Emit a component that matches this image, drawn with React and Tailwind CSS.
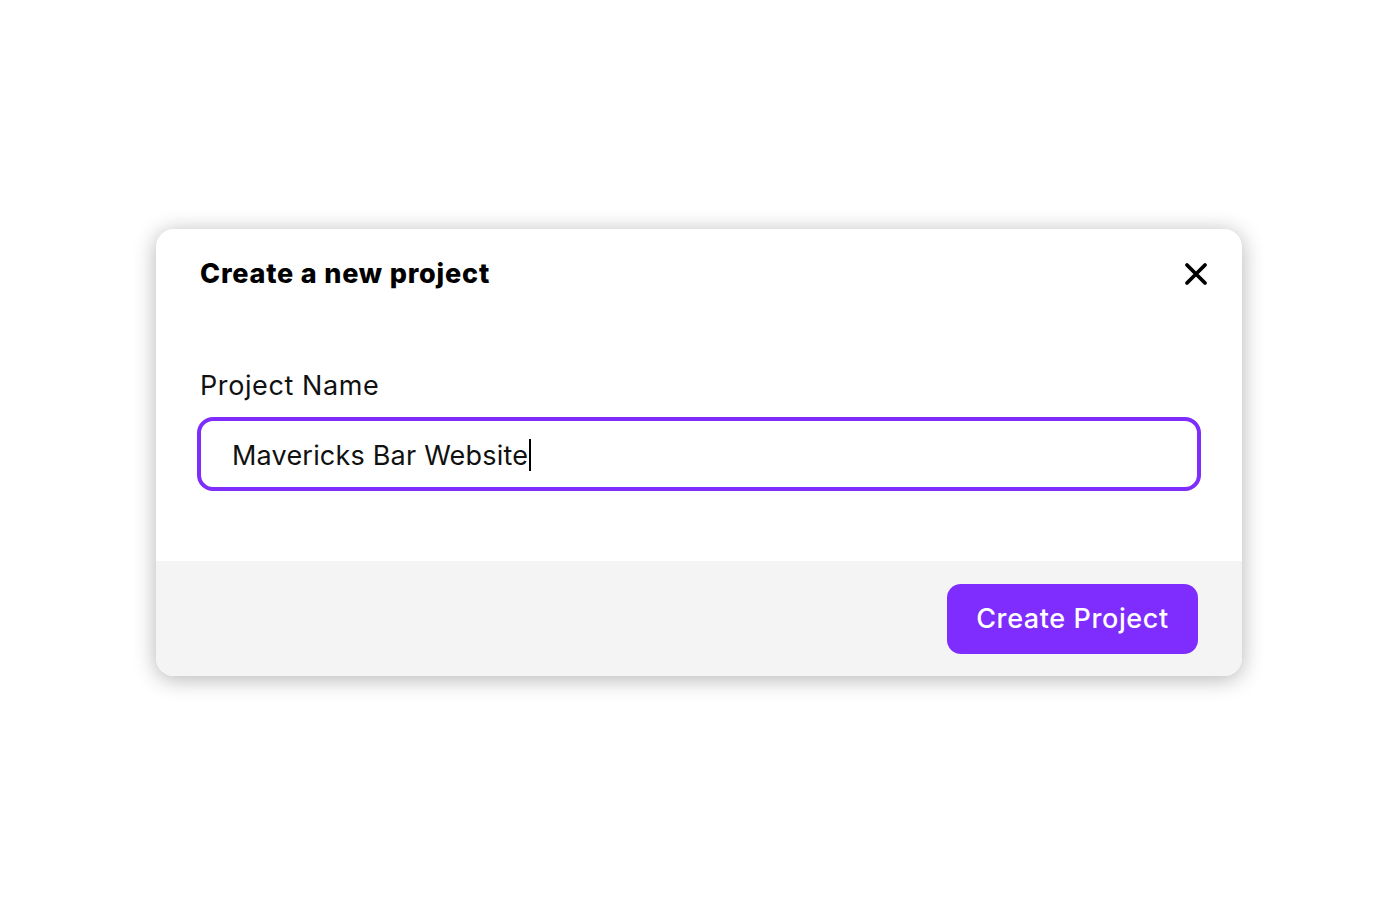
export default function App() {
  return (
    <div className="min-h-screen w-full bg-white flex items-center justify-center font-['Inter',sans-serif]">
      <div className="w-[1086px] h-[447px] mt-[5px] ml-[-2px] bg-white rounded-[18px] shadow-[0_3px_22px_rgba(0,0,0,0.3)] overflow-hidden flex flex-col">
        <div className="flex-1 px-[44px] pt-[28px]">
          <div className="flex items-center justify-between">
            <h2 className="text-[27px] leading-[34px] font-extrabold text-black tracking-[0.8px]">Create a new project</h2>
            <button className="mr-[-10px] w-[24px] h-[24px] flex items-center justify-center" aria-label="Close">
              <svg width="24" height="24" viewBox="0 0 24 24" fill="none" stroke="black" strokeWidth="3.8" strokeLinecap="round">
                <path d="M3 3L21 21M21 3L3 21" />
              </svg>
            </button>
          </div>
          <label className="block mt-[79px] text-[27px] leading-[32px] text-[#111] tracking-[0.6px]">Project Name</label>
          <div className="mt-[15px] ml-[-3px] w-[1004px] h-[74px] rounded-[16px] border-[4px] border-[#7e2dfd] flex items-center px-[31px] pt-[2px]">
            <span className="text-[27px] text-[#111] leading-none tracking-[0.2px]">Mavericks Bar Website</span>
            <span className="w-[2px] h-[32px] bg-black ml-[1px]"></span>
          </div>
        </div>
        <div className="h-[115px] bg-[#f4f4f4] flex items-center justify-end pr-[44px]">
          <button className="w-[251px] h-[70px] rounded-[14px] bg-[#7f2dfe] text-white text-[27px] font-medium tracking-[0.6px] pt-[2px]">
            Create Project
          </button>
        </div>
      </div>
    </div>
  );
}
